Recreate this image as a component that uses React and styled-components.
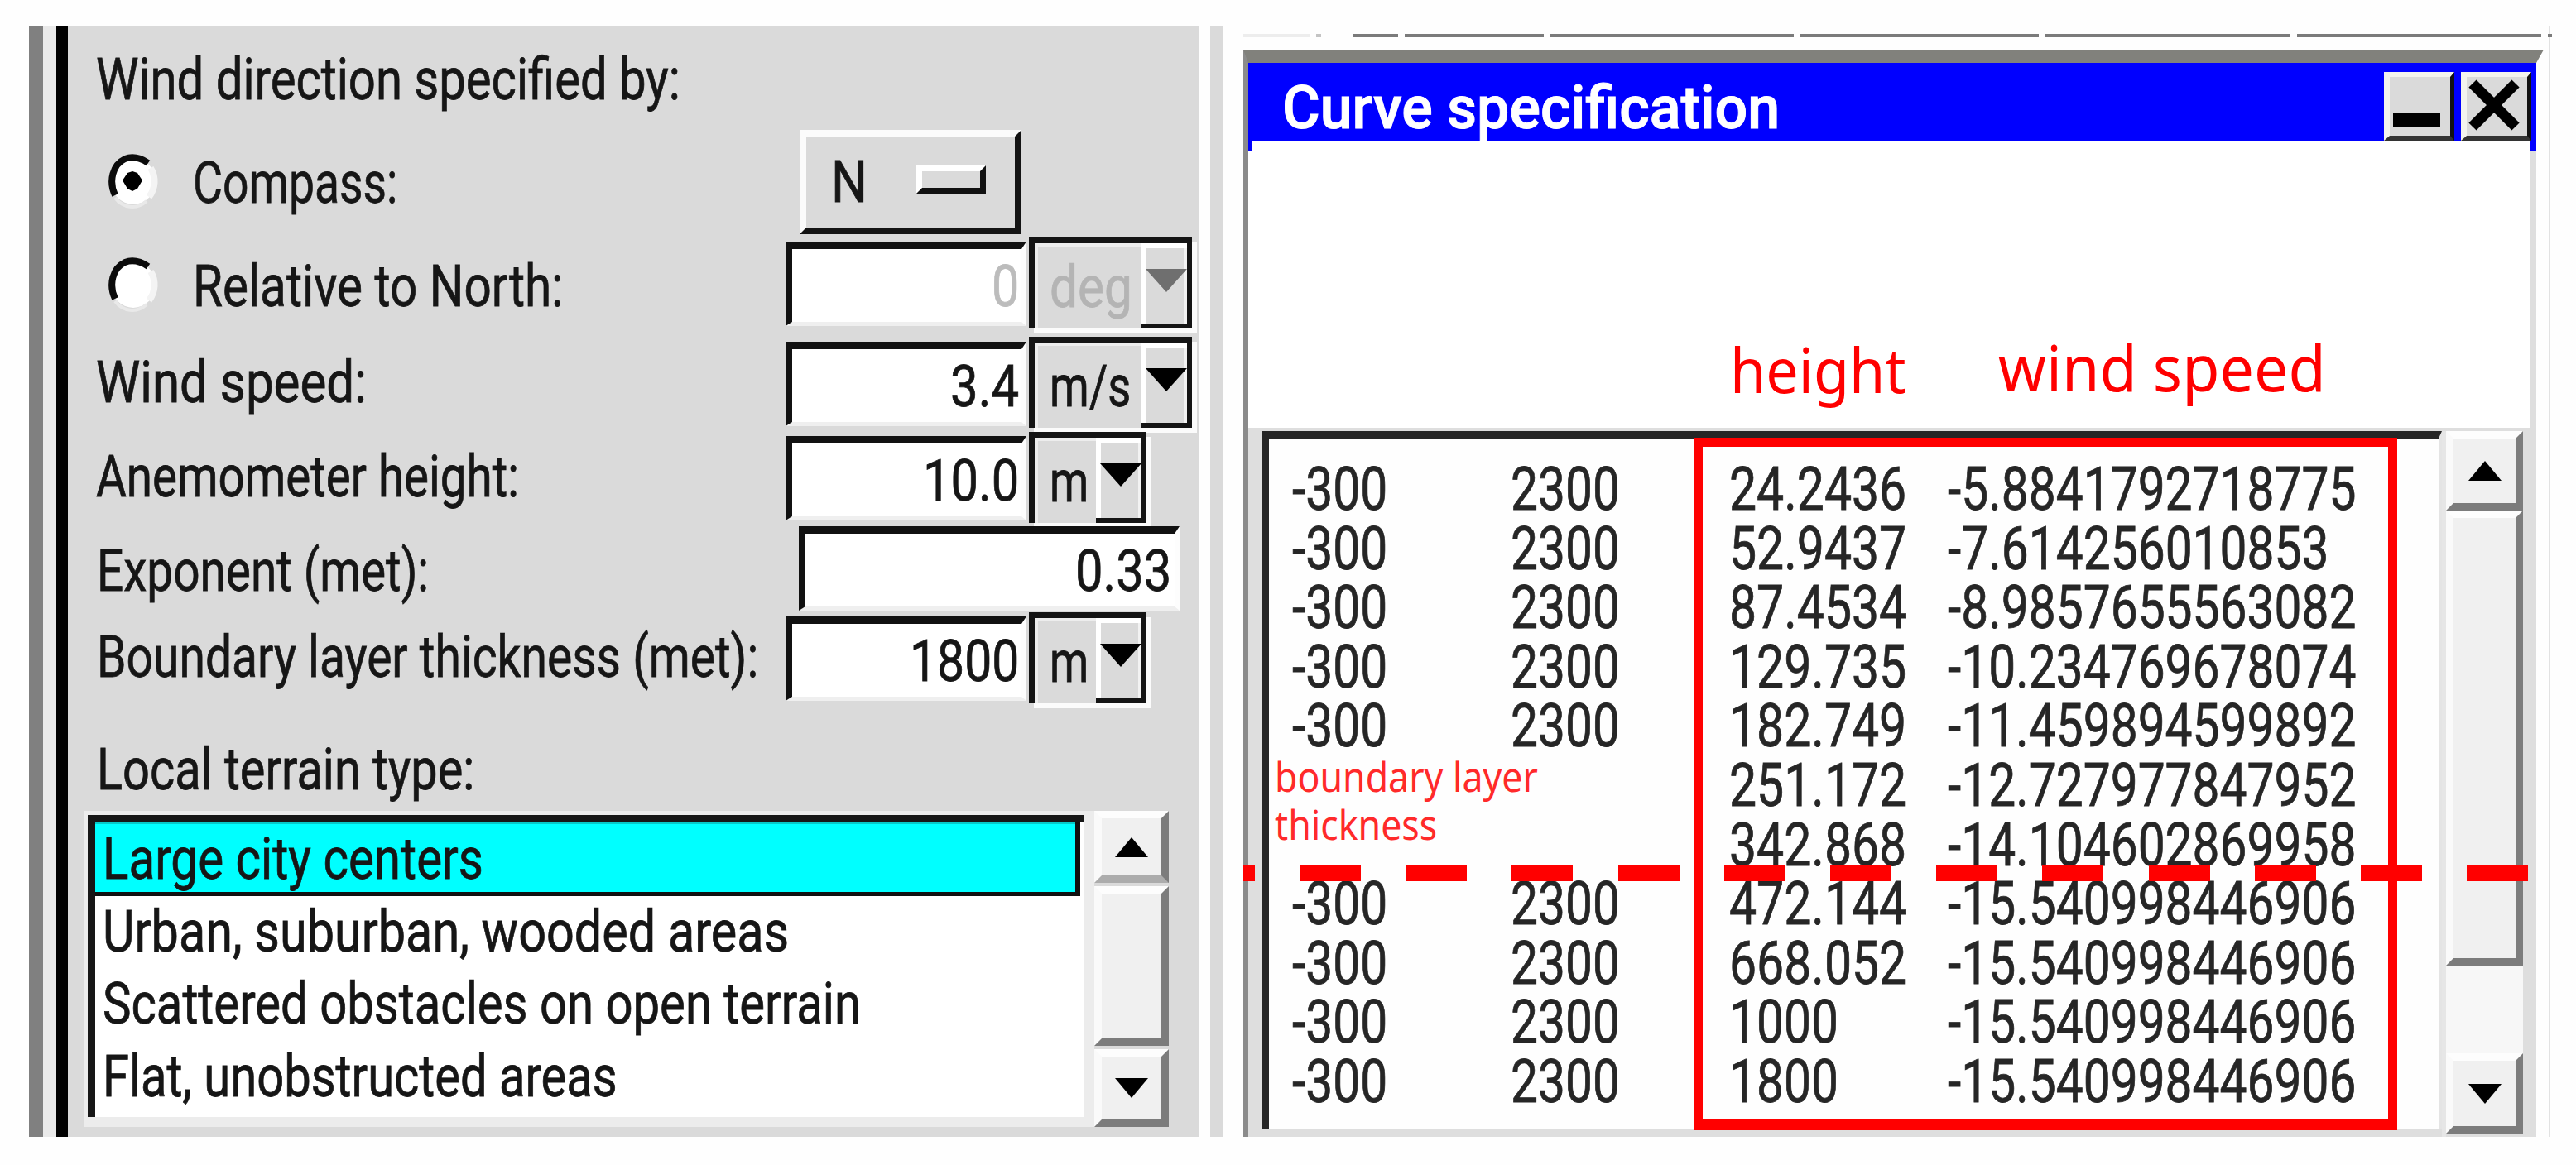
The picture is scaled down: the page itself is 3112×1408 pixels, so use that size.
import React, { useLayoutEffect, useRef, useState } from "react";
import styled, { createGlobalStyle, css } from "styled-components";

const GlobalStyle = createGlobalStyle`
  * { box-sizing: border-box; }
  body { margin: 0; background: #fefefe; overflow: hidden; }
`;

const FACE = "#dadada";
const INK = "#161616";
const RED = "#ff0000";

/* ---------- condensed text ---------- */

const TextBox = styled.span`
  display: block;
  flex: none;
  width: ${(p) => p.$w}px;
  height: ${(p) => p.$line}px;
  line-height: 0;
  white-space: nowrap;
`;

const TextRun = styled.span`
  display: inline-block;
  vertical-align: top;
  transform-origin: 0 50%;
  font-family: ${(p) => (p.$note ? '"Noto Sans", "Open Sans", sans-serif' : 'Roboto, "Liberation Sans", sans-serif')};
  font-size: ${(p) => p.$size}px;
  line-height: ${(p) => p.$line}px;
  font-weight: ${(p) => (p.$bold ? 500 : 400)};
  color: ${(p) => p.$color};
  -webkit-text-stroke: ${(p) => (p.$note ? 0 : p.$bold ? 1 : 0.8)}px ${(p) => p.$color};
`;

function Fit({ w, size = 70, line = 82, color = INK, bold, note, children }) {
  const ref = useRef(null);
  const [scale, setScale] = useState(1);
  useLayoutEffect(() => {
    setScale(w / ref.current.offsetWidth);
  }, [w, size, children]);
  return (
    <TextBox $w={w} $line={line}>
      <TextRun ref={ref} $size={size} $line={line} $color={color} $bold={bold} $note={note} style={{ transform: `scaleX(${scale})` }}>
        {children}
      </TextRun>
    </TextBox>
  );
}

/* ---------- page ---------- */

const Page = styled.div`
  display: flex;
  align-items: flex-start;
  gap: 25px;
  width: 3112px;
  height: 1408px;
  padding: 31px 0 0 35px;
  background: #fefefe;
`;

/* ---------- wind settings panel ---------- */

const Panel = styled.section`
  display: flex;
  width: 1442px;
  height: 1343px;
  background: ${FACE};
`;

const Rail = styled.i`
  flex: none;
  width: ${(p) => p.$w}px;
  background: ${(p) => p.$c};
`;

const Form = styled.div`
  flex: 1;
  display: flex;
  flex-direction: column;
`;

const Row = styled.div`
  display: grid;
  grid-template-columns: 867px 1fr;
  align-items: start;
  flex: none;
  height: ${(p) => p.$h}px;
`;

const Label = styled.label`
  display: flex;
  align-items: center;
  height: 82px;
  margin-top: ${(p) => p.$top}px;
  padding-left: ${(p) => p.$left ?? 34}px;
`;

const RadioIcon = styled.svg`
  flex: none;
  width: 68px;
  height: 72px;
  margin-right: 38px;
`;

function Radio({ checked }) {
  return (
    <RadioIcon viewBox="0 0 68 72">
      <ellipse cx="34" cy="34" rx="27" ry="28" fill="#fff" />
      <path d="M53 53 A27 29 0 0 0 55 18" fill="none" stroke="#f4f4f4" strokeWidth="8" />
      <path d="M12 54 A27 30 0 0 0 50 58" fill="none" stroke="#e9e9e9" strokeWidth="4" />
      <path d="M12 51 C4 34 9 14 24 7 Q37 2 52 12" fill="none" stroke="#0b0b0b" strokeWidth="8" />
      {checked && <path d="M33 22 L39 24 L45 33 L39 43 L33 46 L27 43 L21 33 L27 24 Z" fill="#000" />}
    </RadioIcon>
  );
}

const OptionButton = styled.button`
  display: flex;
  align-items: center;
  width: 268px;
  height: 126px;
  margin-left: 17px;
  padding: 0 35px 0 30px;
  justify-content: space-between;
  background: ${FACE};
  border: 8px solid;
  border-color: #fbfbfb #141414 #141414 #fbfbfb;
`;

const OptionMark = styled.i`
  width: 84px;
  height: 34px;
  border: 7px solid;
  border-color: #fff #111 #111 #fff;
  background: ${FACE};
  margin-top: -6px;
`;

const Field = styled.div`
  display: flex;
  align-items: flex-start;
`;

const Input = styled.div`
  display: flex;
  justify-content: flex-end;
  width: ${(p) => (p.$wide ? 460 : 291)}px;
  height: 102px;
  margin: ${(p) => p.$top}px 0 0 ${(p) => (p.$wide ? 16 : 0)}px;
  padding: 4px ${(p) => (p.$wide ? 4 : 3)}px 0 0;
  background: #fff;
  border: solid;
  border-width: 9px 6px 5px 8px;
  border-color: #111 #fdfdfd #efefef #111;
`;

const Unit = styled.div`
  display: flex;
  width: ${(p) => p.$w}px;
  height: 110px;
  margin: 4px 0 0 3px;
  border: solid #141414;
  border-width: 7px 0 0 7px;
  background: ${FACE};
  box-shadow: 6px 6px 0 #fbfbfb, inset 4px 4px 0 #ededed;
`;

const UnitName = styled.div`
  flex: 1;
  padding: 12px 0 0 18px;
`;

const Drop = styled.div`
  display: flex;
  justify-content: center;
  width: 61px;
  padding: 31px 0 0 5px;
  border: solid #141414;
  border-width: 0 6px 6px 0;
  box-shadow: inset 6px 6px 0 #fff, inset -4px 0 0 #f2f2f2;
`;

const Triangle = styled.svg`
  width: ${(p) => p.$w}px;
  height: ${(p) => p.$h}px;
  fill: ${(p) => p.$c || "#000"};
  flex: none;
`;

const Down = ({ w = 50, h = 28, c }) => (
  <Triangle $w={w} $h={h} $c={c} viewBox="0 0 50 28" preserveAspectRatio="none">
    <path d="M0 0H50L25 28Z" />
  </Triangle>
);

const Up = ({ w, h }) => (
  <Triangle $w={w} $h={h} viewBox="0 0 50 28" preserveAspectRatio="none">
    <path d="M0 28H50L25 0Z" />
  </Triangle>
);

function UnitPicker({ name, nameWidth, disabled, w }) {
  return (
    <Unit $w={w}>
      <UnitName>
        <Fit w={nameWidth} color={disabled ? "#b4b4b4" : INK}>{name}</Fit>
      </UnitName>
      <Drop><Down c={disabled ? "#6f6f6f" : "#000"} /></Drop>
    </Unit>
  );
}

const ListRow = styled.div`
  display: flex;
  padding-left: 20px;
`;

const ListFrame = styled.div`
  width: 1220px;
  height: 382px;
  padding: 5px 13px 12px 4px;
  background: #ececec;
`;

const List = styled.div`
  height: 365px;
  border: solid #161616;
  border-width: 8px 0 0 9px;
  background: #fff;
`;

const Item = styled.div`
  height: 87.4px;
  padding: 2px 0 0 9px;
  ${(p) =>
    p.$selected &&
    css`
      width: 1190px;
      height: 90px;
      padding-top: 4px;
      background: #00ffff;
      border: solid #111;
      border-width: 0 6px 5px 0;
      box-shadow: inset 0 3px 0 #06c9c9;
    `}
`;

const ScrollColumn = styled.div`
  display: flex;
  flex-direction: column;
  gap: ${(p) => p.$gap || 0}px;
  width: ${(p) => p.$w}px;
`;

const Bevel = styled.div`
  display: flex;
  align-items: center;
  justify-content: center;
  flex: none;
  height: ${(p) => p.$h}px;
  background: #f0f0f0;
  border: 9px solid;
  border-color: #fdfdfd #7c7c7c ${(p) => p.$bottom || "#7c7c7c"} #fafafa;
`;

/* ---------- curve window ---------- */

const Desktop = styled.section`
  position: relative;
  width: 1579px;
  height: 1343px;
  border-right: 2px solid #e2e2e2;
`;

const Strip = styled.div`
  display: flex;
  gap: 8px;
  height: 29px;
  padding-top: 10px;
`;

const StripLine = styled.i`
  flex: none;
  width: ${(p) => p.$w}px;
  height: 4px;
  background: ${(p) => p.$c || "#7b7b7b"};
`;

const Window = styled.div`
  width: 1571px;
  height: 1314px;
  border: solid;
  border-width: 16px 9px 0 6px;
  border-color: #81817c #fefefe #fefefe #8b8b8b;
  background: #fff;
`;

const TitleBar = styled.header`
  display: flex;
  align-items: flex-start;
  height: 94px;
  padding: 11px 6px 0 41px;
  gap: 8px;
  background: #0000ff;
`;

const Title = styled.div`
  flex: 1;
  margin-top: 2px;
`;

const WinButton = styled.div`
  width: 85px;
  height: 83px;
  border: solid;
  border-width: 6px 5px 6px 7px;
  border-color: #f3f3ee #111 #333 #f3f3ee;
  background: ${FACE};
`;

const Glyph = styled.svg`
  display: block;
  width: 73px;
  height: 71px;
`;

const Body = styled.div`
  position: relative;
  display: flex;
  height: 347px;
  padding: 221px 0 0 582px;
  border-right: 7px solid #dedede;
  &::before,
  &::after {
    content: "";
    position: absolute;
    top: 0;
    width: 6px;
    height: 12px;
    background: #0000ff;
  }
  &::before { left: 0; width: 4px; }
  &::after { right: -7px; width: 7px; }
`;

const TableArea = styled.div`
  display: flex;
  height: 857px;
  padding: 4px 16px 0 16px;
  background: #dedede;
`;

const Table = styled.div`
  width: 1426px;
  height: 843px;
  padding: 26px 0 0 28px;
  background: #fefefe;
  border: solid;
  border-width: 9px 4px 0 9px;
  border-color: #262626 #e4e4e4 #e6e6e6 #262626;
  flex: none;
`;

const TableRow = styled.div`
  display: grid;
  grid-template-columns: 264px 264px 264px 1fr;
  height: 71.6px;
`;

const Gutter = styled.div`
  width: 5px;
  background: #e6e6e6;
`;

const Trough = styled.div`
  height: 106px;
  background: #f7f7f7;
`;

/* ---------- annotations drawn over the window ---------- */

const Highlight = styled.div`
  position: absolute;
  left: 544px;
  top: 498px;
  width: 850px;
  height: 837px;
  border: solid ${RED};
  border-width: 11px;
  border-bottom-width: 13px;
`;

const DashLine = styled.div`
  position: absolute;
  left: 0;
  top: 1014px;
  width: 1552px;
  height: 20px;
  background: repeating-linear-gradient(90deg, ${RED} 0 74px, transparent 74px 128.2px);
  background-position: -60.2px 0;
  background-size: 1700px 20px;
`;

const Note = styled.div`
  position: absolute;
  left: 38px;
  top: 878px;
`;

const Heading = styled.div`
  margin: ${(p) => p.$top}px ${(p) => p.$gap}px 0 0;
`;

const speeds = [
  ["24.2436", "-5.8841792718775"],
  ["52.9437", "-7.614256010853"],
  ["87.4534", "-8.9857655563082"],
  ["129.735", "-10.234769678074"],
  ["182.749", "-11.459894599892"],
  ["251.172", "-12.727977847952"],
  ["342.868", "-14.104602869958"],
  ["472.144", "-15.540998446906"],
  ["668.052", "-15.540998446906"],
  ["1000", "-15.540998446906"],
  ["1800", "-15.540998446906"],
];

const cellWidth = (t) => [...t].reduce((n, ch) => n + (/\d/.test(ch) ? 32.95 : 16.2), 0);

const Cell = ({ children }) => (
  <Fit w={cellWidth(children)} size={73} line={71.6} color="#262626">{children}</Fit>
);

export default function App() {
  return (
    <>
      <GlobalStyle />
      <Page>
        <Panel>
          <Rail $w={17} $c="#808080" />
          <Rail $w={16} $c="#e9e9e9" />
          <Rail $w={14} $c="#000" />
          <Form>
            <Row $h={126}>
              <Label $top={24}><Fit w={706}>Wind direction specified by:</Fit></Label>
            </Row>
            <Row $h={126}>
              <Label $top={23} $left={45}><Radio checked /><Fit w={247}>Compass:</Fit></Label>
              <OptionButton>
                <Fit w={44}>N</Fit>
                <OptionMark />
              </OptionButton>
            </Row>
            <Row $h={120}>
              <Label $top={22} $left={45}><Radio /><Fit w={447}>Relative to North:</Fit></Label>
              <Field>
                <Input $top={9}><Fit w={33} color="#bcbcbc">0</Fit></Input>
                <UnitPicker w={197} name="deg" nameWidth={100} disabled />
              </Field>
            </Row>
            <Row $h={115}>
              <Label $top={18}><Fit w={327}>Wind speed:</Fit></Label>
              <Field>
                <Input $top={10}><Fit w={83}>3.4</Fit></Input>
                <UnitPicker w={197} name="m/s" nameWidth={98} />
              </Field>
            </Row>
            <Row $h={115}>
              <Label $top={17}><Fit w={511}>Anemometer height:</Fit></Label>
              <Field>
                <Input $top={9}><Fit w={116}>10.0</Fit></Input>
                <UnitPicker w={142} name="m" nameWidth={47} />
              </Field>
            </Row>
            <Row $h={103}>
              <Label $top={16} $left={35}><Fit w={401}>Exponent (met):</Fit></Label>
              <Field>
                <Input $top={3} $wide><Fit w={116}>0.33</Fit></Input>
              </Field>
            </Row>
            <Row $h={120}>
              <Label $top={17} $left={35}><Fit w={799}>Boundary layer thickness (met):</Fit></Label>
              <Field>
                <Input $top={9}><Fit w={132}>1800</Fit></Input>
                <UnitPicker w={142} name="m" nameWidth={47} />
              </Field>
            </Row>
            <Row $h={124}>
              <Label $top={33} $left={35}><Fit w={456}>Local terrain type:</Fit></Label>
            </Row>
            <ListRow>
              <ListFrame>
                <List>
                  <Item $selected><Fit w={460}>Large city centers</Fit></Item>
                  <Item><Fit w={829}>Urban, suburban, wooded areas</Fit></Item>
                  <Item><Fit w={916}>Scattered obstacles on open terrain</Fit></Item>
                  <Item><Fit w={622}>Flat, unobstructed areas</Fit></Item>
                </List>
              </ListFrame>
              <ScrollColumn $w={90} $gap={4}>
                <Bevel $h={87} $bottom="#acacac"><Up w={40} h={24} /></Bevel>
                <Bevel $h={193} />
                <Bevel $h={94}><Down w={40} h={24} /></Bevel>
              </ScrollColumn>
            </ListRow>
          </Form>
          <Rail $w={13} $c="#fefefe" />
          <Rail $w={15} $c={FACE} />
        </Panel>

        <Desktop>
          <Strip>
            <StripLine $w={80} $c="#ededed" />
            <StripLine $w={6} $c="#c4c4c4" />
            <StripLine $w={22} $c="#fefefe" />
            <StripLine $w={55} />
            <StripLine $w={168} />
            <StripLine $w={294} />
            <StripLine $w={288} />
            <StripLine $w={296} />
            <StripLine $w={295} />
            <StripLine $w={5} />
          </Strip>
          <Window>
            <TitleBar>
              <Title><Fit w={601} size={73} color="#fff" bold>Curve specification</Fit></Title>
              <WinButton>
                <Glyph viewBox="0 0 73 71"><rect x="4" y="44" width="57" height="17" /></Glyph>
              </WinButton>
              <WinButton>
                <Glyph viewBox="0 0 73 71"><path d="M7 8L59 60M59 8L7 60" stroke="#000" strokeWidth="13" /></Glyph>
              </WinButton>
            </TitleBar>
            <Body>
              <Heading $top={6} $gap={111}><Fit w={213} size={74} line={100} color={RED} note>height</Fit></Heading>
              <Heading $top={3} $gap={0}><Fit w={396} size={77} line={100} color={RED} note>wind speed</Fit></Heading>
            </Body>
            <TableArea>
              <Table>
                {speeds.map(([height, speed], i) => {
                  const blank = i === 5 || i === 6;
                  return (
                    <TableRow key={height}>
                      {blank ? <span /> : <Cell>-300</Cell>}
                      {blank ? <span /> : <Cell>2300</Cell>}
                      <Cell>{height}</Cell>
                      <Cell>{speed}</Cell>
                    </TableRow>
                  );
                })}
              </Table>
              <Gutter />
              <ScrollColumn $w={93}>
                <Bevel $h={96}><Up w={40} h={24} /></Bevel>
                <Bevel $h={550} />
                <Trough />
                <Bevel $h={97}><Down w={40} h={24} /></Bevel>
              </ScrollColumn>
            </TableArea>
          </Window>
          <Note>
            <Fit w={318} size={49} line={58} color="#ff2a2a" note>boundary layer</Fit>
            <Fit w={196} size={49} line={58} color="#ff2a2a" note>thickness</Fit>
          </Note>
          <Highlight />
          <DashLine />
        </Desktop>
      </Page>
    </>
  );
}
